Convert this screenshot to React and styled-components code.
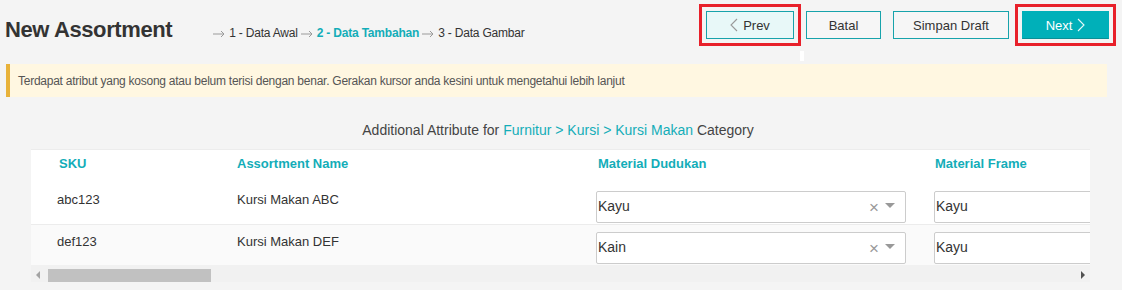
import styled, { createGlobalStyle } from "styled-components";

const GlobalStyle = createGlobalStyle`
  body {
    margin: 0;
    background: #f4f4f4;
    font-family: "Liberation Sans", Arial, sans-serif;
    color: #333;
  }
`;

const Page = styled.div`
  width: 1122px;
  height: 290px;
  overflow: hidden;
`;

const Header = styled.div`
  display: flex;
  justify-content: space-between;
  align-items: flex-start;
  padding: 11px 13px 0 5px;
  height: 28px;
`;

const TitleGroup = styled.div`
  display: flex;
  align-items: baseline;
  gap: 41px;
  margin-top: 6px;
`;

const Title = styled.h1`
  margin: 0;
  font-size: 22px;
  line-height: 26px;
  font-weight: 700;
  color: #333;
  letter-spacing: -0.4px;
`;

const Steps = styled.div`
  display: flex;
  align-items: baseline;
  font-size: 12px;
  color: #333;
  letter-spacing: -0.2px;
`;

const Step = styled.span`
  color: ${(p) => (p.$active ? "#13adb8" : "#333")};
  font-weight: ${(p) => (p.$active ? 700 : 400)};
`;

const ArrowIcon = styled.svg`
  margin: 2px 4px 0 ${(p) => (p.$first ? "0" : "3px")};
  align-self: center;
`;

const Actions = styled.div`
  display: flex;
  align-items: center;
  gap: 12px;
`;

const Button = styled.button`
  all: unset;
  box-sizing: border-box;
  position: relative;
  display: flex;
  align-items: center;
  justify-content: center;
  gap: 5px;
  height: 28px;
  width: ${(p) => p.$w}px;
  font-size: 13px;
  font-family: "Liberation Sans", Arial, sans-serif;
  color: ${(p) => (p.$primary ? "#fff" : "#333")};
  background: ${(p) => (p.$primary ? "#00b0b9" : p.$soft ? "#e8f8f8" : "#f6f6f6")};
  border: 1px solid ${(p) => (p.$primary ? "#00b0b9" : "#17a3ab")};
  border-bottom-color: ${(p) => (p.$primary ? "#0a8f96" : "#17a3ab")};
  border-radius: 0;
  outline: ${(p) => (p.$marked ? "3px solid #e8202a" : "none")};
  outline-offset: 4px;
  cursor: pointer;
  margin-left: ${(p) => (p.$extra ? "1px" : "0")};
`;

const Sliver = styled.span`
  position: absolute;
  left: 93px;
  top: 39px;
  width: 4px;
  height: 10px;
  background: #fff;
`;

const Alert = styled.div`
  margin: 25px 15px 0 6px;
  height: 33px;
  display: flex;
  align-items: center;
  background: #fff7e1;
  border-left: 4px solid #e8b23a;
  padding-left: 8px;
  font-size: 12px;
  letter-spacing: -0.25px;
  color: #555;
`;

const Category = styled.div`
  margin-top: 25px;
  text-align: center;
  font-size: 14px;
  line-height: 16px;
  color: #444;
  padding-right: 6px;
`;

const Link = styled.span`
  color: #13adb8;
`;

const TableWrap = styled.div`
  margin: 11px 32px 0 31px;
  background: #fff;
  border-top: 1px solid #ececec;
  overflow: hidden;
`;

const Row = styled.div`
  display: grid;
  grid-template-columns: 180px 359px 338px 338px;
  height: ${(p) => p.$h}px;
  background: ${(p) => (p.$alt ? "#fafafa" : "#fff")};
  border-bottom: ${(p) => (p.$line ? "1px solid #ececec" : "none")};
`;

const HeadCell = styled.div`
  padding: 6px 0 0 ${(p) => p.$pad || 26}px;
  font-size: 13px;
  line-height: 16px;
  font-weight: 700;
  color: #13adb8;
  white-space: nowrap;
`;

const Cell = styled.div`
  padding: 9px 0 0 26px;
  font-size: 13px;
  line-height: 16px;
  color: #333;
  white-space: nowrap;
`;

const SelectCell = styled.div`
  padding: ${(p) => p.$top}px 0 0 26px;
`;

const Select = styled.div`
  box-sizing: border-box;
  width: 310px;
  height: 32px;
  border: 1px solid #ccc;
  border-radius: 2px;
  background: #fff;
  display: flex;
  align-items: center;
  padding: 0 10px 2px 1px;
  font-size: 14px;
  color: #333;
`;

const Value = styled.span`
  flex: 1;
`;

const Clear = styled.span`
  color: #999;
  font-size: 17px;
  line-height: 14px;
  margin-right: 6px;
  margin-top: 3px;
`;

const Caret = styled.span`
  width: 0;
  height: 0;
  border-left: 5px solid transparent;
  border-right: 5px solid transparent;
  border-top: 5px solid #999;
  margin-bottom: 2px;
`;

const ScrollBar = styled.div`
  height: 17px;
  background: #f1f1f1;
  display: flex;
  align-items: center;
`;

const ScrollArrow = styled.span`
  width: 0;
  height: 0;
  border-top: 4px solid transparent;
  border-bottom: 4px solid transparent;
  ${(p) =>
    p.$dir === "left"
      ? "border-right: 4px solid #a3a3a3; margin-left: 5px;"
      : "border-left: 4px solid #505050; margin-left: auto; margin-right: 5px;"}
  margin-top: 2px;
`;

const Thumb = styled.span`
  width: 163px;
  height: 13px;
  margin-left: 8px;
  margin-top: 4px;
  background: #c1c1c1;
`;

const Chevron = ({ dir, color }) => (
  <svg width="8" height="14" viewBox="0 0 8 14" fill="none">
    <path
      d={dir === "left" ? "M7 1L1 7l6 6" : "M1 1l6 6-6 6"}
      stroke={color}
      strokeWidth="1.1"
    />
  </svg>
);

const StepArrow = ({ first }) => (
  <ArrowIcon $first={first} width="12" height="8" viewBox="0 0 12 8" fill="none">
    <path d="M0 4h11M8 1l3 3-3 3" stroke="#9a9a9a" strokeWidth="1" />
  </ArrowIcon>
);

const MaterialSelect = ({ value, clear, top }) => (
  <SelectCell $top={top}>
    <Select>
      <Value>{value}</Value>
      {clear && (
        <>
          <Clear>×</Clear>
          <Caret />
        </>
      )}
    </Select>
  </SelectCell>
);

const rows = [
  { sku: "abc123", name: "Kursi Makan ABC", dudukan: "Kayu", frame: "Kayu" },
  { sku: "def123", name: "Kursi Makan DEF", dudukan: "Kain", frame: "Kayu" },
];

export default function App() {
  return (
    <Page>
      <GlobalStyle />
      <Header>
        <TitleGroup>
          <Title>New Assortment</Title>
          <Steps>
            <StepArrow first />
            <Step>1 - Data Awal</Step>
            <StepArrow />
            <Step $active>2 - Data Tambahan</Step>
            <StepArrow />
            <Step>3 - Data Gambar</Step>
          </Steps>
        </TitleGroup>
        <Actions>
          <Button $w={88} $soft $marked>
            <Chevron dir="left" color="#999" />
            Prev
            <Sliver />
          </Button>
          <Button $w={75}>Batal</Button>
          <Button $w={116}>Simpan Draft</Button>
          <Button $w={87} $primary $marked $extra>
            Next
            <Chevron dir="right" color="#e6fafa" />
          </Button>
        </Actions>
      </Header>

      <Alert>
        Terdapat atribut yang kosong atau belum terisi dengan benar. Gerakan kursor anda
        kesini untuk mengetahui lebih lanjut
      </Alert>

      <Category>
        Additional Attribute for <Link>Furnitur &gt; Kursi &gt; Kursi Makan</Link> Category
      </Category>

      <TableWrap>
        <Row $h={33}>
          <HeadCell $pad={28}>SKU</HeadCell>
          <HeadCell>Assortment Name</HeadCell>
          <HeadCell $pad={28}>Material Dudukan</HeadCell>
          <HeadCell $pad={27}>Material Frame</HeadCell>
        </Row>
        {rows.map((r, i) => (
          <Row key={r.sku} $h={i === 0 ? 41 : 40} $alt={i === 1} $line={i === 0}>
            <Cell>{r.sku}</Cell>
            <Cell>{r.name}</Cell>
            <MaterialSelect value={r.dudukan} clear top={i === 0 ? 8 : 7} />
            <MaterialSelect value={r.frame} top={i === 0 ? 8 : 7} />
          </Row>
        ))}
        <ScrollBar>
          <ScrollArrow $dir="left" />
          <Thumb />
          <ScrollArrow $dir="right" />
        </ScrollBar>
      </TableWrap>
    </Page>
  );
}
